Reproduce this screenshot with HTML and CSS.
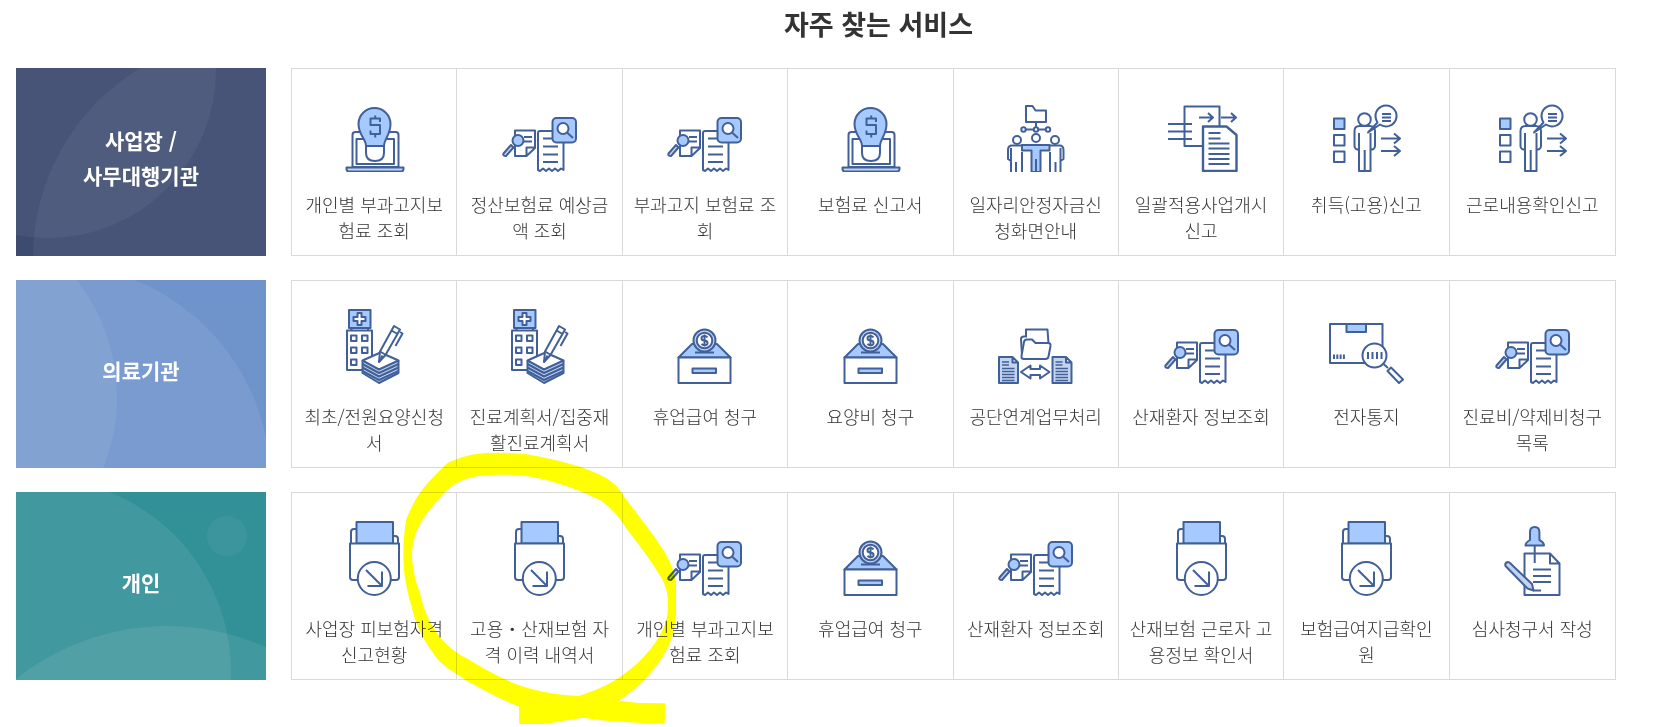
FILE: index.html
```html
<!DOCTYPE html>
<html lang="ko">
<head>
    <meta charset="UTF-8">
    <meta name="viewport" content="width=device-width, initial-scale=1.0">
    <title>자주 찾는 서비스</title>
    <link rel="stylesheet" href="styles.css">
</head>
<body>
    <!-- icon set -->
    <svg class="icon-defs" aria-hidden="true">
        <symbol id="icon-laptop" viewBox="0 0 75 75">
            <path d="M15.500 70V38q0-3 3-3h40q3 0 3 3v32z"/>
            <path d="M19.500 42h37.500v25H19.500z"/>
            <path class="soft" d="M9.500 70.500h57v1.500q0 2.500-2.500 2.500H12q-2.500 0-2.500-2.500z"/>
            <path class="fill" d="M29 49c0-7-7.500-11-7.500-22a16 16 0 0 1 32 0c0 11-6.500 15-6.500 22z"/>
            <path class="white" d="M29 49h18v7q0 8-9 8t-9-8z"/>
            <path d="M43 25v-3.500h-9.500V28H43v9h-9.500v-3.500M38.200 18.500v3M38.200 37v3.500"/>
        </symbol>
        <symbol id="icon-search-doc" viewBox="0 0 75 75">
            <path d="M13 33.500h20V51l-8.500 8H13zM33 50.500h-8.500V59M22 40h8M22 44.500h8"/>
            <path class="soft" d="M1.500 56.500l7.500-8.500 2.500 2.500-7.500 8.500q-3.500 0-2.500-2.500z"/>
            <circle class="fill" cx="16" cy="43.500" r="5.500"/>
            <path class="white" d="M36 73V36q0-2 2-2h23.500v39l-2.500-1.500-3 2.500-3-2.500-3 2.500-3-2.500-3 2.500-3-2.500-3 2.500z"/>
            <path d="M41 41.500h10M41 49.500h15M41 57.500h15M41 65h15"/>
            <rect class="fill" x="50.500" y="21" width="23.500" height="24.500" rx="4"/>
            <circle class="white" cx="61" cy="31.500" r="5.500"/>
            <path d="M65 35.500l6 5.500"/>
        </symbol>
        <symbol id="icon-team" viewBox="0 0 75 75">
            <path d="M28 9h6.500l3 4.500H48V25H28zM38 25v5.500M28 32.500h7.500M40.500 32.500H47"/>
            <circle cx="25.500" cy="32.500" r="2.200"/><circle cx="38" cy="32.500" r="2.200"/><circle cx="50" cy="32.500" r="2.200"/>
            <circle cx="38" cy="41" r="4"/><circle cx="19" cy="43" r="4"/><circle cx="57" cy="43" r="4"/>
            <path d="M13 75V51M13 64l-3-2V53q0-4.500 4-4.500h10M18 75V65M24 75V55M62.500 75V51M62.500 64l3-2V53q0-4.500-4-4.500H52M57.500 75V65M52 75V55"/>
            <path class="fill" d="M24 48h27.500v5.500H42.500V75H33.500V53.500H24z"/>
            <path d="M38 62v13"/>
        </symbol>
        <symbol id="icon-batch" viewBox="0 0 75 75">
            <path d="M20.500 9.500h35v39.500h-35zM4 27h24M4 34.500h24M4 42h24"/>
            <path d="M35 20.500h13M44 16l5 4.500-5 4.500M57 20.500h14M67 16l5 4.500-5 4.500"/>
            <path class="white bold" d="M39 29.500h23.500l10 8.500v36H39z"/>
            <path d="M44.500 36h12M44.500 41.500h12M44.500 46.500h21M44.500 51.500h21M44.500 57h21M44.500 62h21M44.500 67h21"/>
        </symbol>
        <symbol id="icon-person" viewBox="0 0 75 75">
            <path class="fill" d="M5 21.500h10.500V32H5z"/>
            <path d="M5 38h10.500v10.500H5zM5 54.500h10.500V65H5z"/>
            <circle cx="35.500" cy="22.500" r="6.300"/>
            <path d="M30 53l-3-1q-1.500-1-1.500-3V34q0-5 5-5h10q5.500 0 5.500 5v15q0 2-1.500 3l-3 1M30 36v38h11.500V36M35.700 53v21"/>
            <path class="white" d="M51 27.500a10.500 10.500 0 1 0-4-5.500q.5 2 1.500 3.500L39 35.500z"/>
            <path d="M53 17h9M53 20.500h9M53 24h9M52 41.500h18M65 36.500l6 5-6 5M52 54h18M65 49l6 5-6 5"/>
        </symbol>
        <symbol id="icon-hospital" viewBox="0 0 75 75">
            <path class="fill" d="M12 1h21.500v18H12z"/>
            <path class="white" d="M20.500 4h4v4h4v4h-4v4h-4v-4h-4V8h4z"/>
            <path d="M14.500 19v2.500M31 19v2.500M10 21.500h25v39.500H10zM14 26.500h5.500V32H14zM25 26.500h5.500V32H25zM14 38.500h5.500V44H14zM25 38.500h5.500V44H25zM14 50.500h5.500V56H14z"/>
            <path class="soft" d="M25.500 52v12L42 74l19.500-10V52z"/>
            <path d="M25.500 55l16.500 9 19.500-9M25.500 58.500l16.500 9 19.500-9M25.500 62l16.500 9 19.500-9"/>
            <path class="white" d="M25.500 51.500l18-8 18 8-19.500 9z"/>
            <path class="white" d="M42 53l1-10.500L57 17l6 3.500-14.500 25.500z"/>
            <path d="M54.500 21.500l6 3.500M43 42.500l6 3.500M42 53l3.500-6.500M63 23l2.500 1.500-7 12.500"/>
        </symbol>
        <symbol id="icon-coinbox" viewBox="0 0 75 75">
            <path class="fill" d="M11.500 48.500L25 35h25l13.500 13.500z"/>
            <circle class="soft" cx="37.500" cy="31.500" r="11"/>
            <circle class="white" cx="37.500" cy="31.500" r="7.800"/>
            <path d="M40.500 28.500q-1-1.500-3-1.500-3 0-3 2.200t3 2.300 3 2.500-3 2.300q-2 0-3-1.600M37.500 25.500v12M28 43.500h19"/>
            <path class="white" d="M11.500 48.500h52V74h-52z"/>
            <path class="fill" d="M25.500 59.500h23.500v4.500H25.500z"/>
        </symbol>
        <symbol id="icon-exchange" viewBox="0 0 75 75">
            <path d="M28 28V20.500h21.500l1 14"/>
            <path d="M24 46l-1-16q0-2.500 3-2.500h3"/>
            <path class="white" d="M26 33q.5-2.500 3-2.500h5l3.500 3.500H50q3 0 2.500 3L50.500 47.500q-.5 2.500-3 2.500H26q-3 0-2.500-3z"/>
            <path class="soft" d="M1 48h13.500l5.500 5.500V74H1zM14.500 48v5.500H20M54.500 48H68l5.500 5.500V74h-19zM68 48v5.500h5.500"/>
            <path class="thin" d="M4 53h7M4 56h7M4 59.500h12.500M4 62.500h12.500M4 65.500h12.500M4 68.500h12.500M4 71.500h12.500M57.500 53h7M57.500 56h7M57.500 59.500H70M57.500 62.500H70M57.500 65.500H70M57.500 68.500H70M57.500 71.500H70"/>
            <path d="M23 63l9.500-6.500V60h9.500v-3.500l9.500 6.500-9.500 6.500V66h-9.500v3.500z"/>
        </symbol>
        <symbol id="icon-parcel" viewBox="0 0 75 75">
            <path d="M1 15h52.500v39H1z"/>
            <path class="fill" d="M17.500 15H37v8H17.500z"/>
            <path d="M5 45.500V50M8.300 45.500V50M11.600 45.500V50M14.900 45.500V50"/>
            <circle class="white" cx="45.500" cy="46.500" r="12"/>
            <path d="M39 43v7M43.500 43v7M48 43v7M52.500 43v7M54.500 55l4.500 4"/>
            <path d="M58.500 62l3.500-3.500L74 70.500 70 74z"/>
        </symbol>
        <symbol id="icon-folder-down" viewBox="0 0 75 75">
            <path d="M14 22V11q0-3 3-3h2.500M55.500 15H58q3 0 3 3v4"/>
            <path class="fill" d="M19.500 1h36.500v21.500H19.500z"/>
            <path class="white" d="M13 22.500h49V56q0 3-3 3H16q-3 0-3-3z"/>
            <circle class="white" cx="37.300" cy="57.500" r="16.500"/>
            <path d="M29 49l16 16M45 50.500V65H30.500"/>
        </symbol>
        <symbol id="icon-pin-doc" viewBox="0 0 75 75">
            <path d="M29.500 32.500h25.500l9.500 10V74h-35zM55 32.500v10h9.500M38 48.500h18M38 55h18M38 61h18"/>
            <path class="fill" d="M30.500 24.500q0-3 4.500-5.500V11q0-5 4.700-5t4.700 5v8q4.600 2.500 4.600 5.500z"/>
            <path d="M39.700 24.500V42M38 69.500h8"/>
            <path class="soft" d="M10.500 45q-1-3 2-4 2 0 3 1.500L37 63l1.500 6.500-6-2z"/>
        </symbol>
    </svg>

    <main class="services">
        <h2 class="title">자주 찾는 서비스</h2>

        <section class="row">
            <h3 class="category business">
                <svg class="shapes" viewBox="0 0 250 188" preserveAspectRatio="xMidYMid slice" aria-hidden="true">
                    <circle cx="32" cy="2" r="168"/>
                    <circle cx="239" cy="190" r="222"/>
                </svg>
                <span>사업장 /<br>사무대행기관</span>
            </h3>
            <ul class="items">
                <li><a href="#"><svg class="icon"><use href="#icon-laptop"/></svg>개인별 부과고지보험료 조회</a></li>
                <li><a href="#"><svg class="icon"><use href="#icon-search-doc"/></svg>정산보험료 예상금액 조회</a></li>
                <li><a href="#"><svg class="icon"><use href="#icon-search-doc"/></svg>부과고지 보험료 조회</a></li>
                <li><a href="#"><svg class="icon"><use href="#icon-laptop"/></svg>보험료 신고서</a></li>
                <li><a href="#"><svg class="icon"><use href="#icon-team"/></svg>일자리안정자금신청화면안내</a></li>
                <li><a href="#"><svg class="icon"><use href="#icon-batch"/></svg>일괄적용사업개시신고</a></li>
                <li><a href="#"><svg class="icon"><use href="#icon-person"/></svg>취득(고용)신고</a></li>
                <li><a href="#"><svg class="icon"><use href="#icon-person"/></svg>근로내용확인신고</a></li>
            </ul>
        </section>

        <section class="row">
            <h3 class="category medical">
                <svg class="shapes" viewBox="0 0 250 188" preserveAspectRatio="xMidYMid slice" aria-hidden="true">
                    <circle cx="39" cy="200" r="215"/>
                    <circle cx="-90" cy="117" r="191"/>
                </svg>
                <span>의료기관</span>
            </h3>
            <ul class="items">
                <li><a href="#"><svg class="icon"><use href="#icon-hospital"/></svg>최초/전원요양신청서</a></li>
                <li><a href="#"><svg class="icon"><use href="#icon-hospital"/></svg>진료계획서/집중재활진료계획서</a></li>
                <li><a href="#"><svg class="icon"><use href="#icon-coinbox"/></svg>휴업급여 청구</a></li>
                <li><a href="#"><svg class="icon"><use href="#icon-coinbox"/></svg>요양비 청구</a></li>
                <li><a href="#"><svg class="icon"><use href="#icon-exchange"/></svg>공단연계업무처리</a></li>
                <li><a href="#"><svg class="icon"><use href="#icon-search-doc"/></svg>산재환자 정보조회</a></li>
                <li><a href="#"><svg class="icon"><use href="#icon-parcel"/></svg>전자통지</a></li>
                <li><a href="#"><svg class="icon"><use href="#icon-search-doc"/></svg>진료비/약제비청구목록</a></li>
            </ul>
        </section>

        <section class="row">
            <h3 class="category personal">
                <svg class="shapes" viewBox="0 0 250 188" preserveAspectRatio="xMidYMid slice" aria-hidden="true">
                    <circle cx="21" cy="180" r="194"/>
                    <circle cx="151" cy="376" r="242"/>
                    <circle class="dot" cx="211" cy="44" r="20"/>
                </svg>
                <span>개인</span>
            </h3>
            <ul class="items">
                <li><a href="#"><svg class="icon"><use href="#icon-folder-down"/></svg>사업장 피보험자격신고현황</a></li>
                <li>
                    <a href="#"><svg class="icon"><use href="#icon-folder-down"/></svg>고용・산재보험 자격 이력 내역서</a>
                    <!-- highlighter circle -->
                    <svg class="marker" viewBox="0 0 900 861" aria-hidden="true">
                        <path fill-rule="evenodd" d="M40 350C40 310 42 270 50 235C62 205 75 180 90 158C115 125 145 95 172 70C200 55 235 44 265 41C310 36 360 38 410 43C465 52 520 65 575 82C610 95 640 108 660 122C685 140 697 160 705 173C740 220 780 270 810 315C835 350 850 385 858 425L858 520C856 560 848 590 835 620C815 660 790 690 765 718C740 745 710 765 688 782L745 789L826 790L824 852L700 846C655 843 615 838 578 833C535 839 490 848 440 855L388 861L387 800C330 778 280 750 230 722C190 695 150 675 130 640C100 600 75 550 65 500C50 450 40 400 40 350ZM66 340C68 310 72 290 84 265C100 230 130 195 160 162C180 140 200 128 225 118C255 107 285 104 340 104C400 104 440 112 480 123C540 140 590 160 635 183C675 212 695 245 720 280C755 325 785 365 815 415C830 445 834 465 834 490C834 520 832 545 815 575C795 615 765 650 730 680C690 715 640 745 565 768C500 764 440 755 385 735C335 715 285 690 230 655C190 635 155 605 135 570C110 530 100 500 93 470C75 420 66 385 66 340Z"/>
                    </svg>
                </li>
                <li><a href="#"><svg class="icon"><use href="#icon-search-doc"/></svg>개인별 부과고지보험료 조회</a></li>
                <li><a href="#"><svg class="icon"><use href="#icon-coinbox"/></svg>휴업급여 청구</a></li>
                <li><a href="#"><svg class="icon"><use href="#icon-search-doc"/></svg>산재환자 정보조회</a></li>
                <li><a href="#"><svg class="icon"><use href="#icon-folder-down"/></svg>산재보험 근로자 고용정보 확인서</a></li>
                <li><a href="#"><svg class="icon"><use href="#icon-folder-down"/></svg>보험급여지급확인원</a></li>
                <li><a href="#"><svg class="icon"><use href="#icon-pin-doc"/></svg>심사청구서 작성</a></li>
            </ul>
        </section>
    </main>
</body>
</html>
```
FILE: styles.css
```css
* { box-sizing: border-box; }
body { margin: 0; background: #fff; color: #333; font-family: "Noto Sans CJK KR", "Noto Sans", sans-serif; }
.icon-defs { display: none; }

.services { padding: 0 40px 20px 16px; }
.title { margin: 0 0 20px; padding-left: 125px; font-size: 27px; line-height: 48px; font-weight: 700; text-align: center; }

.row { display: flex; gap: 25px; margin-bottom: 24px; }
.category { position: relative; display: flex; flex: 0 0 250px; align-items: center; justify-content: center; margin: 0; padding-bottom: 8px; overflow: hidden; color: #fff; font-size: 21px; line-height: 35px; font-weight: 700; text-align: center; }
.category span { position: relative; }
.business { background: #3e4b70; }
.medical { background: #6f94cc; }
.personal { background: #329097; }
.shapes { position: absolute; inset: 0; width: 100%; height: 100%; fill: rgba(255, 255, 255, 0.06); }
.business .shapes { fill: rgba(255, 255, 255, 0.05); }
.medical .shapes { fill: rgba(255, 255, 255, 0.07); }
.personal .shapes { fill: rgba(255, 255, 255, 0.08); }
.personal .shapes .dot { fill: rgba(255, 255, 255, 0.05); }

.items { display: grid; flex: 1; grid-template-columns: repeat(8, minmax(0, 1fr)); margin: 0; padding: 0; border: 1px solid #d9d9d9; list-style: none; }
.items li { position: relative; min-height: 186px; border-right: 1px solid #d9d9d9; }
.items li:last-child { border-right: none; }
.items a { display: block; padding: 28px 10px 12px; color: #333; font-size: 18px; line-height: 26px; font-weight: 300; text-align: center; text-decoration: none; word-break: break-all; }
.items a:hover { text-decoration: underline; }

.icon { display: block; width: 75px; height: 75px; margin: 0 auto 19px; fill: none; stroke: #41609a; stroke-width: 2; stroke-linejoin: round; }
.fill { fill: #a6caff; }
.soft { fill: #c3d4ee; }
.white { fill: #fff; }
.bold { stroke-width: 2.4; }
.thin { stroke-width: 1.4; }

.marker { position: absolute; top: -53px; left: -67px; z-index: 1; width: 300px; height: 287px; fill: #ff0; mix-blend-mode: multiply; pointer-events: none; }
```
